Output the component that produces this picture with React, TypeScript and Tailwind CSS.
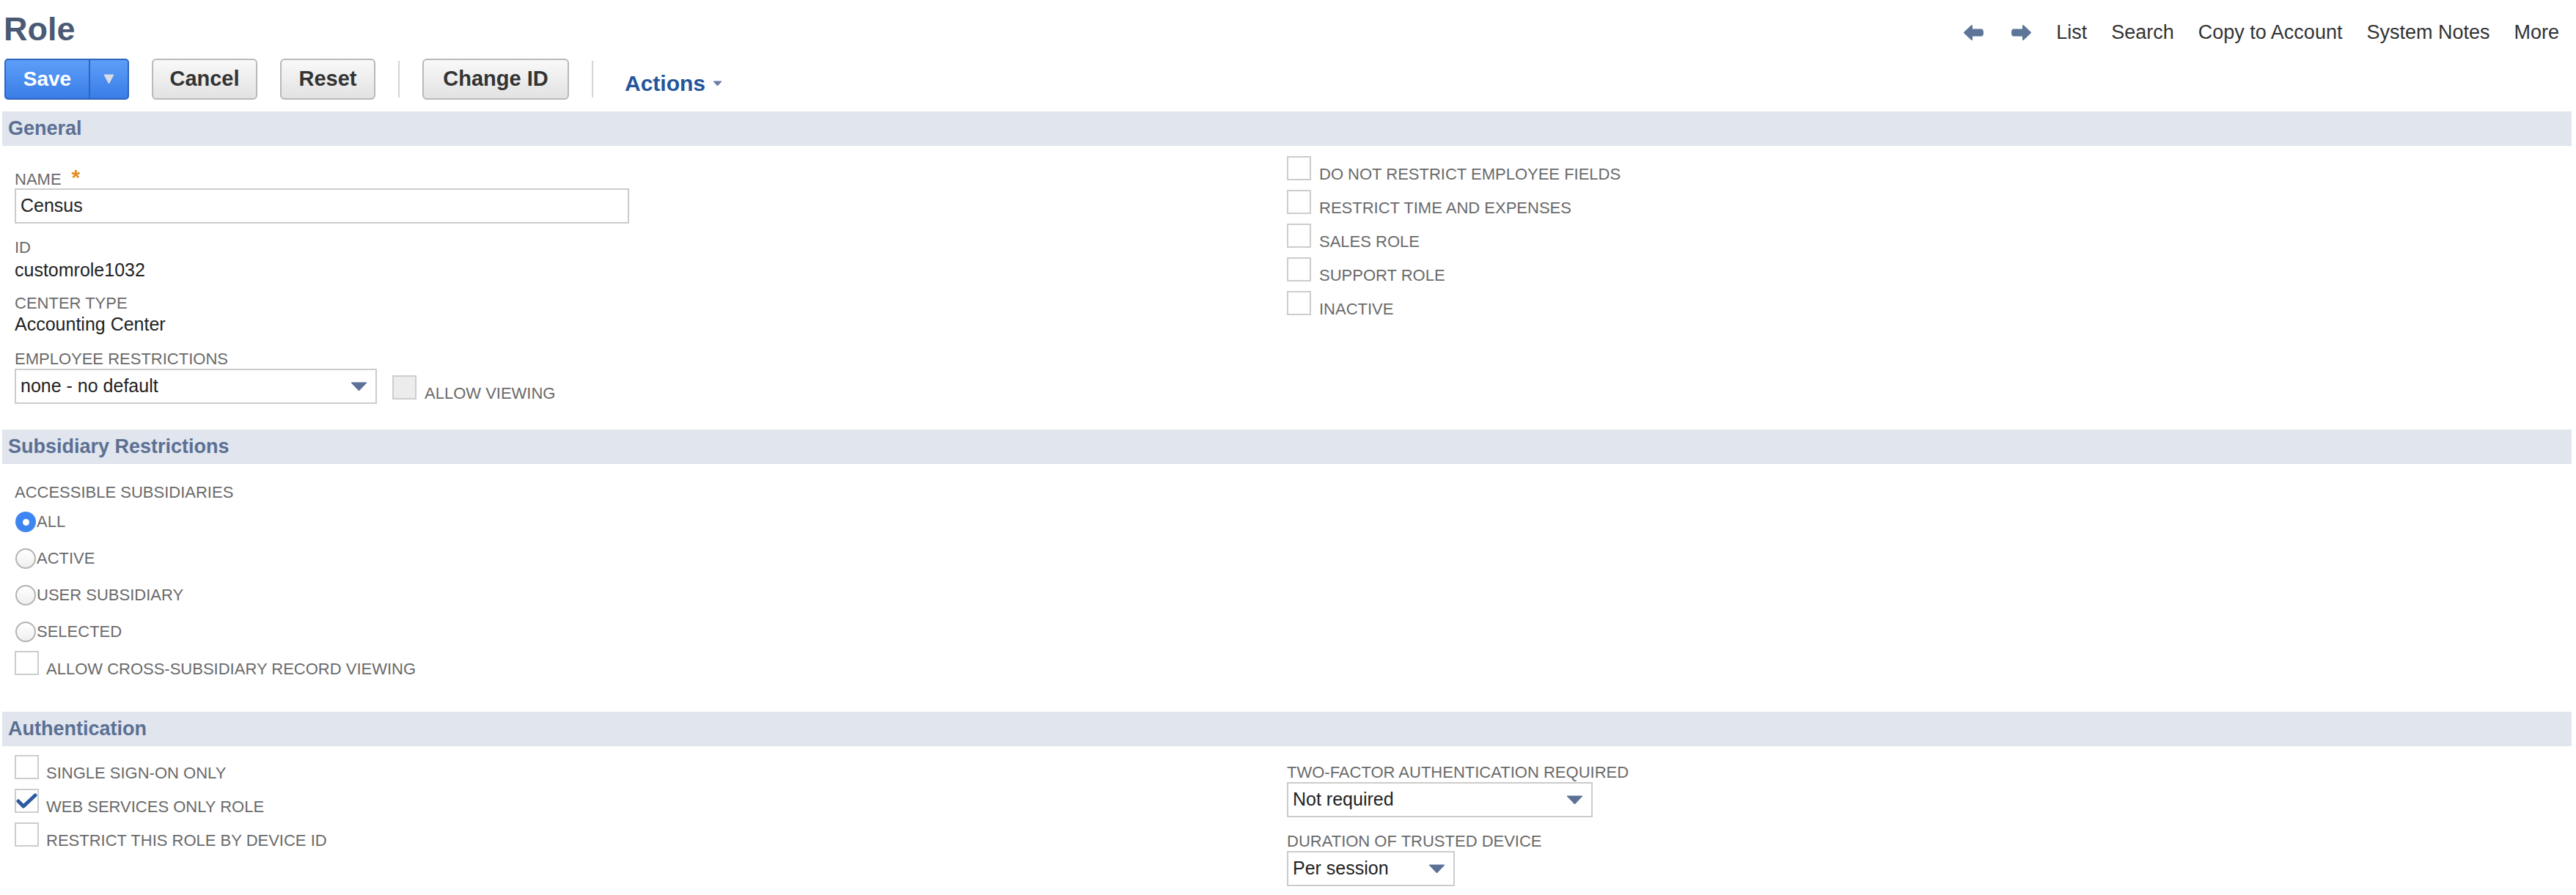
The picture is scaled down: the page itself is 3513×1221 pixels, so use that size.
import React from "react"

function Checkbox({ checked = false, disabled = false }: { checked?: boolean; disabled?: boolean }) {
  return (
    <div
      className={`w-[33px] h-[33px] shrink-0 border-2 border-[#cdcdcd] ${disabled ? "bg-[#ececec]" : "bg-white"}`}
    >
      {checked && (
        <svg width="29" height="29" viewBox="0 0 29 29">
          <path
            d="M3 15 L10 22 L26 7"
            fill="none"
            stroke="#2c5aa0"
            strokeWidth="5"
            strokeLinecap="round"
            strokeLinejoin="round"
          />
        </svg>
      )}
    </div>
  )
}

function Radio({ checked = false }: { checked?: boolean }) {
  if (checked) {
    return (
      <div className="w-[28px] h-[28px] shrink-0 rounded-full bg-[#3d86f2] flex items-center justify-center">
        <div className="w-[9px] h-[9px] rounded-full bg-white" />
      </div>
    )
  }
  return (
    <div className="w-[28px] h-[28px] shrink-0 rounded-full border-2 border-[#b4b4b4] bg-linear-to-b from-white to-[#efefef]" />
  )
}

function Caret({ w = 23, h = 13, color = "#5d7197" }: { w?: number; h?: number; color?: string }) {
  return (
    <svg width={w} height={h} viewBox={`0 0 ${w} ${h}`}>
      <path d={`M1 1 L${w - 1} 1 L${w / 2} ${h - 1} Z`} fill={color} stroke={color} strokeLinejoin="round" />
    </svg>
  )
}

function Select({ value, width }: { value: string; width: string }) {
  return (
    <div
      className={`${width} h-[48px] border-2 border-[#cccccc] bg-white flex items-center justify-between pl-[6px] pr-[11px] text-[25px] text-[#222]`}
    >
      <span>{value}</span>
      <Caret />
    </div>
  )
}

function Label({ children, className = "" }: { children: React.ReactNode; className?: string }) {
  return <div className={`h-[24px] text-[22px] leading-[24px] text-[#6a6a6a] uppercase whitespace-nowrap ${className}`}>{children}</div>
}

function Value({ children, className = "" }: { children: React.ReactNode; className?: string }) {
  return <div className={`text-[25px] leading-[26px] text-[#222] ${className}`}>{children}</div>
}

// checkbox + label, label baseline sits on the box bottom
function CheckRow({ label, checked = false, gap = "ml-[10px]" }: { label: string; checked?: boolean; gap?: string }) {
  return (
    <div className="flex items-start h-[33px]">
      <Checkbox checked={checked} />
      <Label className={`${gap} mt-[13px]`}>{label}</Label>
    </div>
  )
}

function SectionBar({ title }: { title: string }) {
  return (
    <div className="ml-[3px] mr-[6px] h-[47px] bg-[#e0e5ee] flex items-center pl-[8px]">
      <span className="text-[27px] font-bold text-[#5b6f93]">{title}</span>
    </div>
  )
}

function GrayButton({ label, width }: { label: string; width: string }) {
  return (
    <div
      className={`${width} h-[56px] rounded-[6px] border-2 border-[#b9b9b9] bg-linear-to-b from-[#f9f9f9] to-[#e2e2e2] flex items-center justify-center text-[29px] font-bold text-[#333]`}
    >
      {label}
    </div>
  )
}

function NavArrow({ dir }: { dir: "left" | "right" }) {
  return (
    <svg width="29" height="25" viewBox="0 0 29 25" className={dir === "right" ? "-scale-x-100" : ""}>
      <path
        d="M2 12.5 L12 3 L12 8.5 L25 8.5 Q27 8.5 27 12.5 Q27 16.5 25 16.5 L12 16.5 L12 22 Z"
        fill="#5d7599"
        stroke="#5d7599"
        strokeWidth="2"
        strokeLinejoin="round"
      />
    </svg>
  )
}

export default function App() {
  const navLinks = ["List", "Search", "Copy to Account", "System Notes", "More"]

  return (
    <div className="w-full min-h-screen bg-white font-['Liberation_Sans',Arial,sans-serif]">
      {/* header */}
      <div className="flex justify-between h-[80px]">
        <h1 className="pl-[5px] pt-[15px] text-[45px] leading-[50px] font-bold text-[#4b5a74]">Role</h1>
        <div className="flex items-center gap-[33px] pt-[28px] pr-[23px] self-start h-[60px]">
          <div className="flex items-center gap-[36px]">
            <NavArrow dir="left" />
            <NavArrow dir="right" />
          </div>
          {navLinks.map((l) => (
            <span key={l} className="text-[27px] leading-[32px] text-[#333]">
              {l}
            </span>
          ))}
        </div>
      </div>

      {/* buttons */}
      <div className="flex items-start gap-[31px] pl-[6px] h-[56px]">
        <div className="flex w-[170px] h-[56px] rounded-[5px] border-2 border-[#2f64bf] bg-linear-to-b from-[#5c9ef8] to-[#3a7de6] overflow-hidden">
          <div className="w-[115px] flex items-center justify-center border-r-2 border-[#2f64bf] text-white font-bold text-[28px]">
            Save
          </div>
          <div className="flex-1 flex items-center justify-center">
            <Caret w={15} h={14} color="#d6dce6" />
          </div>
        </div>
        <GrayButton label="Cancel" width="w-[144px]" />
        <GrayButton label="Reset" width="w-[130px]" />
        <div className="w-[2px] h-[50px] mt-[3px] bg-[#d4d4d4]" />
        <GrayButton label="Change ID" width="w-[200px]" />
        <div className="w-[2px] h-[50px] mt-[3px] bg-[#d4d4d4]" />
        <div className="ml-[12px] mt-[17px] flex items-center gap-[10px]">
          <span className="text-[30px] leading-[34px] font-bold text-[#24559c]">Actions</span>
          <Caret w={13} h={8} color="#6b7fa3" />
        </div>
      </div>

      {/* General */}
      <div className="mt-[16px]">
        <SectionBar title="General" />
        <div className="flex pl-[20px] pb-[35px]">
          <div className="w-[1735px] shrink-0 pt-[31px]">
            <div className="flex items-baseline h-[24px]">
              <Label>Name</Label>
              <span className="ml-[14px] text-[30px] leading-[24px] font-bold text-[#e08e1f]">*</span>
            </div>
            <div className="mt-[3px] w-[838px] h-[48px] border-2 border-[#cccccc] flex items-center pl-[6px] text-[25px] text-[#222]">
              Census
            </div>
            <Label className="mt-[21px]">ID</Label>
            <Value className="mt-[5px]">customrole1032</Value>
            <Label className="mt-[21px]">Center Type</Label>
            <Value className="mt-[3px]">Accounting Center</Value>
            <Label className="mt-[23px]">Employee Restrictions</Label>
            <div className="mt-[1px] flex items-start">
              <Select value="none - no default" width="w-[494px]" />
              <div className="ml-[21px] mt-[9px]">
                <Checkbox disabled />
              </div>
              <Label className="ml-[11px] mt-[22px]">Allow Viewing</Label>
            </div>
          </div>
          <div className="pt-[14px] flex flex-col gap-[13px]">
            <CheckRow label="Do not restrict employee fields" gap="ml-[11px]" />
            <CheckRow label="Restrict time and expenses" gap="ml-[11px]" />
            <CheckRow label="Sales role" gap="ml-[11px]" />
            <CheckRow label="Support role" gap="ml-[11px]" />
            <CheckRow label="Inactive" gap="ml-[11px]" />
          </div>
        </div>
      </div>

      {/* Subsidiary Restrictions */}
      <SectionBar title="Subsidiary Restrictions" />
      <div className="pl-[20px] pt-[27px] pb-[50px]">
        <Label>Accessible Subsidiaries</Label>
        <div className="mt-[14px] flex flex-col gap-[22px]">
          {[
            { l: "All", c: true },
            { l: "Active", c: false },
            { l: "User Subsidiary", c: false },
            { l: "Selected", c: false },
          ].map((r) => (
            <div key={r.l} className="flex items-start pl-[1px]">
              <Radio checked={r.c} />
              <Label className="ml-[1px] mt-[2px]">{r.l}</Label>
            </div>
          ))}
        </div>
        <div className="mt-[12px]">
          <CheckRow label="Allow cross-subsidiary record viewing" />
        </div>
      </div>

      {/* Authentication */}
      <SectionBar title="Authentication" />
      <div className="flex pl-[20px] pb-[12px]">
        <div className="w-[1735px] shrink-0 pt-[12px] flex flex-col gap-[13px]">
          <CheckRow label="Single sign-on only" />
          <CheckRow label="Web services only role" checked />
          <CheckRow label="Restrict this role by device ID" />
        </div>
        <div className="pt-[24px]">
          <Label>Two-factor authentication required</Label>
          <div className="mt-[1px]">
            <Select value="Not required" width="w-[417px]" />
          </div>
          <Label className="mt-[21px]">Duration of trusted device</Label>
          <div className="mt-[1px]">
            <Select value="Per session" width="w-[229px]" />
          </div>
        </div>
      </div>
    </div>
  )
}
